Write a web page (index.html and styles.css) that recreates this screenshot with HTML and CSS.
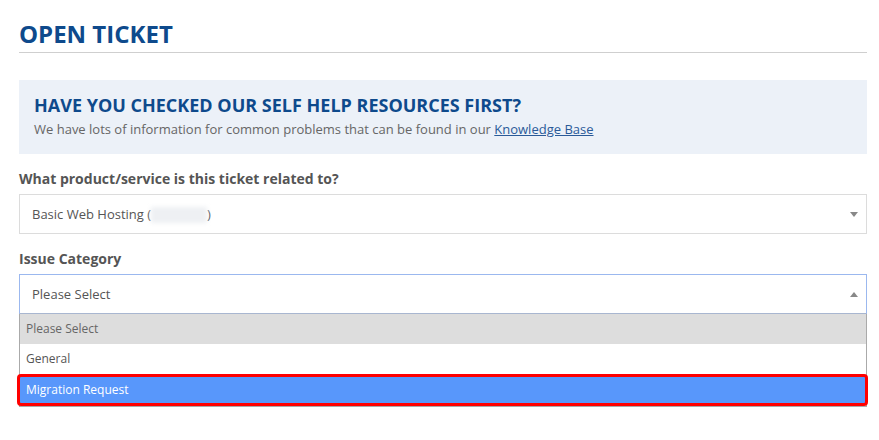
FILE: index.html
```html
<!DOCTYPE html>
<html lang="en">
<head>
  <meta charset="UTF-8" />
  <title>Open Ticket</title>
  <link rel="stylesheet" href="styles.css">
</head>
<body>
  <div class="page">
    <h1 class="page-title">OPEN TICKET</h1>

    <div class="help-box">
      <h2>HAVE YOU CHECKED OUR SELF HELP RESOURCES FIRST?</h2>
      <p>We have lots of information for common problems that can be found in our <a href="#">Knowledge Base</a></p>
    </div>

    <div class="field">
      <label>What product/service is this ticket related to?</label>
      <div class="select">
        <span>Basic Web Hosting (<span class="blur"></span>)</span>
        <span class="arrow down"></span>
      </div>
    </div>

    <div class="field">
      <label>Issue Category</label>
      <div class="select open">
        <span>Please Select</span>
        <span class="arrow up"></span>
      </div>
      <ul class="options">
        <li class="muted">Please Select</li>
        <li>General</li>
        <li class="active">Migration Request</li>
      </ul>
    </div>
  </div>
</body>
</html>
```

FILE: styles.css
```css
/* Reset */
*, *::before, *::after {
  margin: 0;
  padding: 0;
  box-sizing: border-box;
}
body {
  font-family: 'Open Sans', sans-serif;
  background: #fff;
  color: #555;
}
.page {
  width: 848px;
  margin-left: 19px;
  padding-top: 16px;
}
.page-title {
  font-size: 24px;
  font-weight: 700;
  color: #0e4a8c;
  line-height: 36px;
  border-bottom: 1px solid #cfcfcf;
  height: 37px;
}
.help-box {
  margin-top: 27px;
  background: #ecf1f8;
  padding: 13px 15px 15px;
  height: 74px;
}
.help-box h2 {
  font-size: 18px;
  font-weight: 700;
  color: #0e4a8c;
  line-height: 25px;
}
.help-box p {
  font-size: 13px;
  color: #666;
  line-height: 22px;
}
.help-box a {
  color: #2a5a98;
}
.field {
  margin-top: 15px;
}
.field label {
  display: block;
  font-size: 14px;
  font-weight: 700;
  color: #555;
  line-height: 20px;
  margin-bottom: 5px;
}
.select {
  height: 40px;
  border: 1px solid #dcdcdc;
  display: flex;
  align-items: center;
  justify-content: space-between;
  padding: 0 8px 0 12px;
  font-size: 13px;
  color: #555;
}
.select.open {
  border-color: #9bb8ef;
  border-bottom-color: #a8b6d0;
}
.blur {
  display: inline-block;
  width: 56px;
  height: 16px;
  vertical-align: middle;
  background: #eef0f3;
  filter: blur(2px);
}
.arrow {
  width: 0;
  height: 0;
  border-left: 4px solid transparent;
  border-right: 4px solid transparent;
}
.arrow.down {
  border-top: 5px solid #888;
}
.arrow.up {
  border-bottom: 5px solid #888;
}
.options {
  list-style: none;
  border: 1px solid #aaa;
  border-top: 0;
  font-size: 12px;
  color: #555;
}
.options li {
  height: 30px;
  line-height: 30px;
  padding-left: 6px;
}
.options li.muted {
  background: #ddd;
  color: #666;
}
.options li.active {
  background: #5897fb;
  color: #fff;
  border: 3px solid #f00;
  border-radius: 4px;
  height: 32px;
  line-height: 26px;
  margin: 0 -2px 0 -3px;
  padding-left: 6px;
}
```
